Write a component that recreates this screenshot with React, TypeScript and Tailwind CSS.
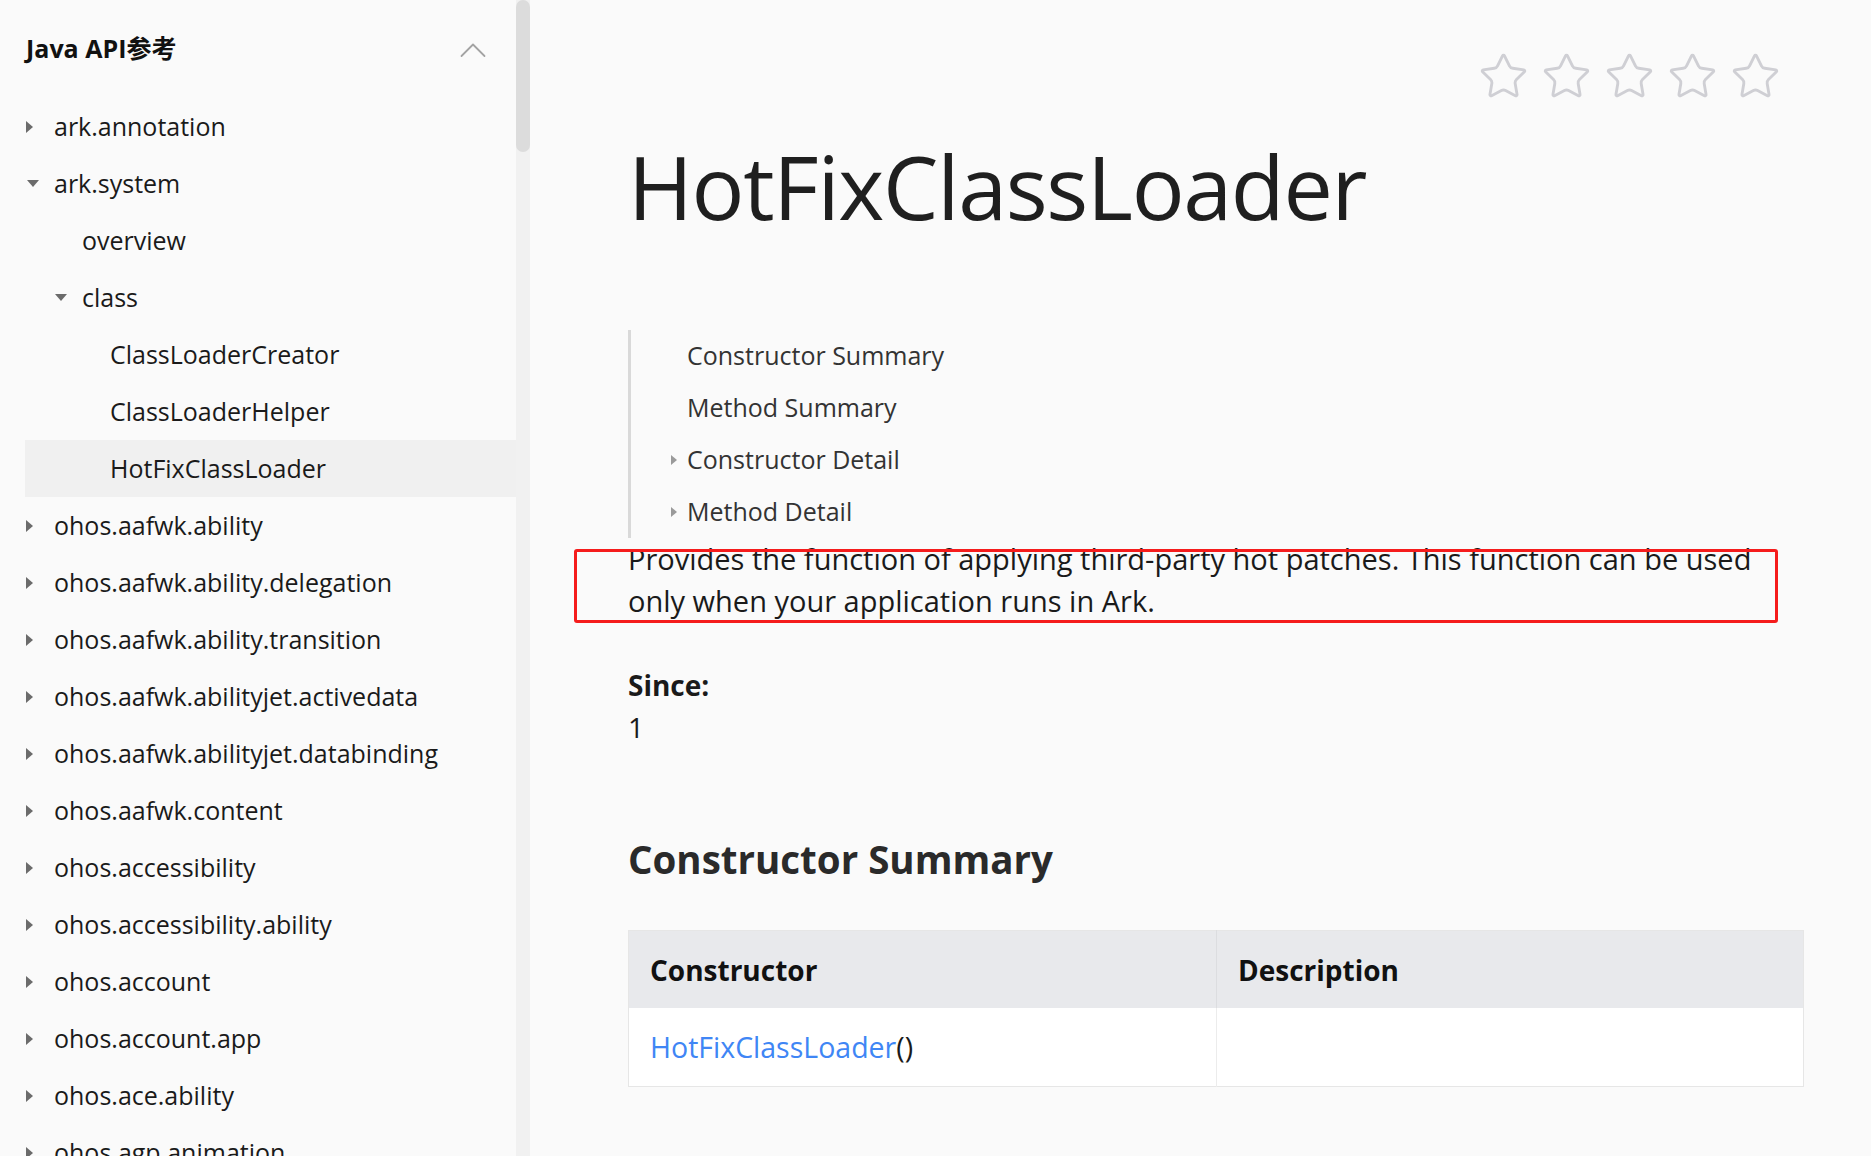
import { Star } from "lucide-react";

type NavItem = {
  label: string;
  level: number;
  state?: "open" | "closed";
  active?: boolean;
};

const navItems: NavItem[] = [
  { label: "ark.annotation", level: 0, state: "closed" },
  { label: "ark.system", level: 0, state: "open" },
  { label: "overview", level: 1 },
  { label: "class", level: 1, state: "open" },
  { label: "ClassLoaderCreator", level: 2 },
  { label: "ClassLoaderHelper", level: 2 },
  { label: "HotFixClassLoader", level: 2, active: true },
  { label: "ohos.aafwk.ability", level: 0, state: "closed" },
  { label: "ohos.aafwk.ability.delegation", level: 0, state: "closed" },
  { label: "ohos.aafwk.ability.transition", level: 0, state: "closed" },
  { label: "ohos.aafwk.abilityjet.activedata", level: 0, state: "closed" },
  { label: "ohos.aafwk.abilityjet.databinding", level: 0, state: "closed" },
  { label: "ohos.aafwk.content", level: 0, state: "closed" },
  { label: "ohos.accessibility", level: 0, state: "closed" },
  { label: "ohos.accessibility.ability", level: 0, state: "closed" },
  { label: "ohos.account", level: 0, state: "closed" },
  { label: "ohos.account.app", level: 0, state: "closed" },
  { label: "ohos.ace.ability", level: 0, state: "closed" },
  { label: "ohos.agp.animation", level: 0, state: "closed" },
];

const indent = ["pl-0", "pl-[28px]", "pl-[56px]"];

const Caret = ({ state }: { state?: "open" | "closed" }) => {
  if (state === "closed") {
    return <span className="block h-0 w-0 border-y-[6px] border-l-[7px] border-y-transparent border-l-[#6b6b6b]" />;
  }
  if (state === "open") {
    return <span className="ml-px block h-0 w-0 border-x-[6px] border-t-[7px] border-x-transparent border-t-[#6b6b6b]" />;
  }
  return null;
};

const SmallCaret = () => (
  <span className="block h-0 w-0 border-y-[5px] border-l-[6px] border-y-transparent border-l-[#9a9a9a]" />
);

const Sidebar = () => (
  <div className="flex h-full shrink-0">
    <div className="w-[516px] pl-[25px]">
      <div className="flex h-[98px] items-center justify-between pl-px pr-[30px]">
        <h3 className="text-[25px] font-bold text-[#111]">Java API参考</h3>
        <svg width="26" height="16" viewBox="0 0 26 16" fill="none" className="mt-[2px]">
          <polyline points="1.5,14 13,2.5 24.5,14" stroke="#a3a3a3" strokeWidth="1.8" strokeLinecap="round" strokeLinejoin="round" />
        </svg>
      </div>
      {navItems.map((item) => (
        <div
          key={item.label}
          className={`flex h-[57px] items-center ${indent[item.level]} ${item.active ? "bg-[#f0f0f0]" : ""}`}
        >
          <div className="flex w-[29px] items-center pl-px">
            <Caret state={item.state} />
          </div>
          <span className="text-[25px] whitespace-nowrap text-[#1a1a1a]">{item.label}</span>
        </div>
      ))}
    </div>
    <div className="h-full w-[14px] bg-[#f1f1f1]">
      <div className="h-[152px] rounded-full bg-[#dcdcdc]" />
    </div>
  </div>
);

const tocItems = [
  { label: "Constructor Summary", caret: false },
  { label: "Method Summary", caret: false },
  { label: "Constructor Detail", caret: true },
  { label: "Method Detail", caret: true },
];

const Content = () => (
  <div className="min-w-0 flex-1 pl-[98px] pr-[67px]">
    <div className="flex justify-end gap-[12px] pt-[51px] pr-[23px]">
      {[0, 1, 2, 3, 4].map((i) => (
        <Star key={i} size={51} strokeWidth={1.35} className="text-[#cfcfd4]" />
      ))}
    </div>

    <h1 className="mt-[40px] text-[88px] leading-none tracking-[-1.3px] text-[#1f1f1f]">HotFixClassLoader</h1>

    <div className="mt-[100px] w-fit border-l-[3px] border-[#d9d9d9] pl-[40px]">
      {tocItems.map((t) => (
        <div key={t.label} className="flex h-[52px] items-center">
          <div className="flex w-[16px] items-center">{t.caret && <SmallCaret />}</div>
          <span className="text-[25px] text-[#333]">{t.label}</span>
        </div>
      ))}
    </div>

    <div className="relative">
      <p className="text-[29px] leading-[42px] text-[#1a1a1a]">
        Provides the function of applying third-party hot patches. This function can be used
        <br />
        only when your application runs in Ark.
      </p>
      <div className="pointer-events-none absolute top-[11px] -bottom-[1px] -left-[54px] right-[26px] rounded-[3px] border-[3px] border-[#f51c1c]" />
    </div>

    <div className="mt-[42px] text-[28px] font-bold text-[#1a1a1a]">Since:</div>
    <div className="text-[28px] text-[#1a1a1a]">1</div>

    <h2 className="mt-[83px] text-[38.5px] font-bold text-[#2a2a2a]">Constructor Summary</h2>

    <table className="mt-[41px] w-full border-collapse border border-[#e6e6e6] text-left">
      <thead>
        <tr className="h-[78px] bg-[#e8e9ec]">
          <th className="w-[588px] border-r border-[#dcdde0] pl-[21px] text-[28px] font-bold text-[#111]">
            Constructor
          </th>
          <th className="pl-[21px] text-[28px] font-bold text-[#111]">Description</th>
        </tr>
      </thead>
      <tbody>
        <tr className="h-[78px] bg-white">
          <td className="border-r border-[#ececec] pl-[21px] text-[28.5px]">
            <span className="text-[#3f86f5]">HotFixClassLoader</span>
            <span className="text-[#1a1a1a]">()</span>
          </td>
          <td />
        </tr>
      </tbody>
    </table>
  </div>
);

export default function App() {
  return (
    <div
      className="flex h-[1156px] w-full overflow-hidden bg-[#fafafa]"
      style={{ fontFamily: '"Open Sans", "Noto Sans CJK SC", sans-serif' }}
    >
      <Sidebar />
      <Content />
    </div>
  );
}
